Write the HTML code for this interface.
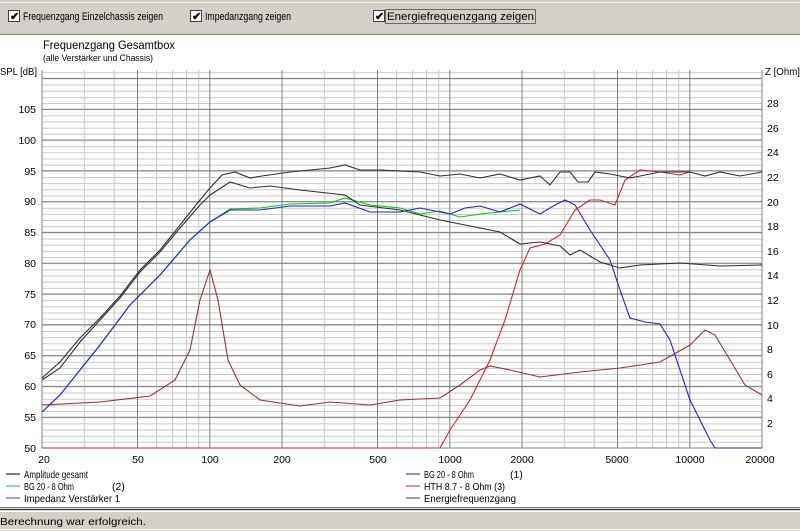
<!DOCTYPE html>
<html><head><meta charset="utf-8"><style>
body{margin:0;width:800px;height:531px;overflow:hidden;background:#fff;font-family:"Liberation Sans",sans-serif;position:relative}
svg text{font-family:"Liberation Sans",sans-serif}
</style></head><body>
<svg width="800" height="531" style="position:absolute;left:0;top:0">
<defs><pattern id="h" patternUnits="userSpaceOnUse" x="0" y="448" width="10" height="6.16"><line x1="0" y1="0.5" x2="10" y2="0.5" stroke="#c8c8c8" stroke-width="1"/></pattern></defs>
<rect x="0" y="0" width="800" height="35" fill="#d4d0c8"/>
<line x1="0" y1="2.5" x2="800" y2="2.5" stroke="#f0f0f0"/>
<line x1="0" y1="34.5" x2="800" y2="34.5" stroke="#808080"/>
<g font-size="11">
<rect x="8.5" y="10.5" width="11" height="11" fill="#fff" stroke="#404040"/><text x="10" y="20" font-size="11" font-weight="bold">✔</text>
<text x="23" y="20" textLength="140" lengthAdjust="spacingAndGlyphs">Frequenzgang Einzelchassis zeigen</text>
<rect x="190.5" y="10.5" width="11" height="11" fill="#fff" stroke="#404040"/><text x="192" y="20" font-size="11" font-weight="bold">✔</text>
<text x="205" y="20" textLength="86" lengthAdjust="spacingAndGlyphs">Impedanzgang zeigen</text>
<rect x="373.5" y="10.5" width="11" height="11" fill="#fff" stroke="#404040"/><text x="375" y="20" font-size="11" font-weight="bold">✔</text>
<rect x="385.5" y="9.5" width="150" height="14" fill="none" stroke="#000" stroke-dasharray="1,1"/>
<text x="387" y="20" textLength="147" lengthAdjust="spacingAndGlyphs">Energiefrequenzgang zeigen</text>
</g>
<text x="43" y="49" font-size="12" textLength="132" lengthAdjust="spacingAndGlyphs">Frequenzgang Gesamtbox</text>
<text x="43" y="61" font-size="9.5" textLength="110" lengthAdjust="spacingAndGlyphs">(alle Verstärker und Chassis)</text>
<rect x="42" y="70" width="720" height="378" fill="url(#h)"/>
<g stroke="#c8c8c8" stroke-width="1">
<line x1="84.3" y1="70" x2="84.3" y2="448"/><line x1="114.2" y1="70" x2="114.2" y2="448"/><line x1="156.5" y1="70" x2="156.5" y2="448"/><line x1="172.6" y1="70" x2="172.6" y2="448"/><line x1="186.5" y1="70" x2="186.5" y2="448"/><line x1="198.8" y1="70" x2="198.8" y2="448"/>
<line x1="324.3" y1="70" x2="324.3" y2="448"/><line x1="354.2" y1="70" x2="354.2" y2="448"/><line x1="396.5" y1="70" x2="396.5" y2="448"/><line x1="412.6" y1="70" x2="412.6" y2="448"/><line x1="426.5" y1="70" x2="426.5" y2="448"/><line x1="438.8" y1="70" x2="438.8" y2="448"/>
<line x1="564.3" y1="70" x2="564.3" y2="448"/><line x1="594.2" y1="70" x2="594.2" y2="448"/><line x1="636.5" y1="70" x2="636.5" y2="448"/><line x1="652.6" y1="70" x2="652.6" y2="448"/><line x1="666.5" y1="70" x2="666.5" y2="448"/><line x1="678.8" y1="70" x2="678.8" y2="448"/>
</g>
<g stroke="#808080" stroke-width="1">
<line x1="42" y1="417.2" x2="762" y2="417.2"/><line x1="42" y1="386.4" x2="762" y2="386.4"/><line x1="42" y1="355.6" x2="762" y2="355.6"/><line x1="42" y1="324.8" x2="762" y2="324.8"/><line x1="42" y1="294" x2="762" y2="294"/><line x1="42" y1="263.2" x2="762" y2="263.2"/><line x1="42" y1="232.4" x2="762" y2="232.4"/><line x1="42" y1="201.6" x2="762" y2="201.6"/><line x1="42" y1="170.8" x2="762" y2="170.8"/><line x1="42" y1="140" x2="762" y2="140"/><line x1="42" y1="109.2" x2="762" y2="109.2"/><line x1="42" y1="78.4" x2="762" y2="78.4"/>
<line x1="137.5" y1="70" x2="137.5" y2="448"/><line x1="209.8" y1="70" x2="209.8" y2="448"/><line x1="282" y1="70" x2="282" y2="448"/><line x1="377.5" y1="70" x2="377.5" y2="448"/><line x1="449.8" y1="70" x2="449.8" y2="448"/><line x1="522" y1="70" x2="522" y2="448"/><line x1="617.5" y1="70" x2="617.5" y2="448"/><line x1="689.8" y1="70" x2="689.8" y2="448"/>
<line x1="42" y1="70" x2="42" y2="448"/><line x1="762" y1="70" x2="762" y2="448"/><line x1="42" y1="448" x2="762" y2="448"/>
</g>
<g font-size="10.5" text-anchor="end">
<text x="37" y="75" textLength="37" lengthAdjust="spacingAndGlyphs">SPL [dB]</text>
<text x="36" y="452">50</text><text x="36" y="421">55</text><text x="36" y="390">60</text><text x="36" y="359">65</text><text x="36" y="328">70</text><text x="36" y="298">75</text><text x="36" y="267">80</text><text x="36" y="236">85</text><text x="36" y="205">90</text><text x="36" y="175">95</text><text x="36" y="144">100</text><text x="36" y="113">105</text>
</g>
<g font-size="10.5">
<text x="765" y="75" textLength="35" lengthAdjust="spacingAndGlyphs">Z [Ohm]</text>
<text x="767" y="427">2</text><text x="767" y="402">4</text><text x="767" y="378">6</text><text x="767" y="353">8</text><text x="767" y="329">10</text><text x="767" y="304">12</text><text x="767" y="279">14</text><text x="767" y="255">16</text><text x="767" y="230">18</text><text x="767" y="206">20</text><text x="767" y="181">22</text><text x="767" y="156">24</text><text x="767" y="132">26</text><text x="767" y="107">28</text>
</g>
<g font-size="10.5" text-anchor="middle">
<text x="44" y="463">20</text><text x="138" y="463">50</text><text x="210" y="463">100</text><text x="282" y="463">200</text><text x="378" y="463">500</text><text x="450" y="463">1000</text><text x="522" y="463">2000</text><text x="617" y="463">5000</text><text x="690" y="463">10000</text><text x="760" y="463">20000</text>
</g>
<g fill="none" stroke-width="1.1">
<polyline stroke="#a03030" points="42,405 100,402 150,396 175,380 190,350 200,300 210,270 218,300 228,360 240,385 260,400 300,406 330,402 370,405 400,400 440,398 460,385 480,370 490,366 510,370 540,377 580,372 620,368 660,362 690,345 705,330 715,335 730,360 745,385 762,395"/>
<polyline stroke="#00d000" points="42,412 60,395 80,370 100,345 130,305 160,275 190,240 210,222 230,209 260,208 290,204 330,203 345,198 370,205 400,208 420,214 440,211 460,217 480,214 500,212 520,210"/>
<polyline stroke="#2020e0" points="42,412 60,395 80,370 100,345 130,305 160,275 190,240 210,222 230,210 260,210 290,206 330,206 345,203 370,212 400,212 420,208 440,212 450,214 465,208 480,206 500,212 520,204 540,214 555,205 565,200 575,205 590,230 610,260 620,290 630,318 645,322 660,324 670,340 680,370 690,400 700,420 710,440 715,448 762,448"/>
<polyline stroke="#e02020" points="42,448 440,448 450,430 470,400 490,360 505,320 520,270 530,248 545,244 560,235 575,210 590,200 600,200 615,205 625,180 640,170 660,172 680,175 690,172"/>
<polyline stroke="#303030" points="42,380 60,368 80,342 100,320 120,298 140,272 160,252 180,228 200,205 210,195 230,182 250,188 270,186 300,190 345,195 360,205 400,210 440,220 470,226 500,232 520,244 540,242 560,246 570,255 580,250 600,262 620,268 640,265 680,263 720,266 762,265"/>
<polyline stroke="#303030" points="42,378 60,362 80,338 100,318 120,296 140,270 160,250 180,225 200,200 210,188 222,175 235,172 250,178 262,176 290,172 330,168 345,165 360,170 380,170 420,172 440,176 460,174 480,178 500,174 520,180 540,176 550,185 560,172 570,172 578,182 588,182 595,172 610,174 630,178 660,172 690,172 705,176 720,172 740,176 762,172"/>
</g>
<g font-size="10.5">
<line x1="6" y1="474" x2="20" y2="474" stroke="#000"/><text x="24" y="478" textLength="64" lengthAdjust="spacingAndGlyphs">Amplitude gesamt</text>
<line x1="6" y1="486" x2="20" y2="486" stroke="#00d000"/><text x="24" y="490" textLength="50" lengthAdjust="spacingAndGlyphs">BG 20 - 8 Ohm</text><text x="112" y="490">(2)</text>
<line x1="6" y1="498" x2="20" y2="498" stroke="#a03030"/><text x="24" y="502" textLength="96" lengthAdjust="spacingAndGlyphs">Impedanz Verstärker 1</text>
<line x1="406" y1="474" x2="420" y2="474" stroke="#2020e0"/><text x="424" y="478" textLength="50" lengthAdjust="spacingAndGlyphs">BG 20 - 8 Ohm</text><text x="510" y="478">(1)</text>
<line x1="406" y1="486" x2="420" y2="486" stroke="#e02020"/><text x="424" y="490" textLength="81" lengthAdjust="spacingAndGlyphs">HTH 8.7 - 8 Ohm (3)</text>
<line x1="406" y1="498" x2="420" y2="498" stroke="#404040"/><text x="424" y="502" textLength="92" lengthAdjust="spacingAndGlyphs">Energiefrequenzgang</text>
</g>
<rect x="0" y="507" width="800" height="24" fill="#d4d0c8"/>
<line x1="0" y1="507.5" x2="800" y2="507.5" stroke="#808080"/>
<line x1="0" y1="509.5" x2="800" y2="509.5" stroke="#404040"/>
<line x1="0" y1="511.5" x2="800" y2="511.5" stroke="#fff"/>
<line x1="0" y1="529.5" x2="800" y2="529.5" stroke="#fff"/>
<text x="0" y="525" font-size="10.5" textLength="146" lengthAdjust="spacingAndGlyphs">Berechnung war erfolgreich.</text>
</svg>
</body></html>
